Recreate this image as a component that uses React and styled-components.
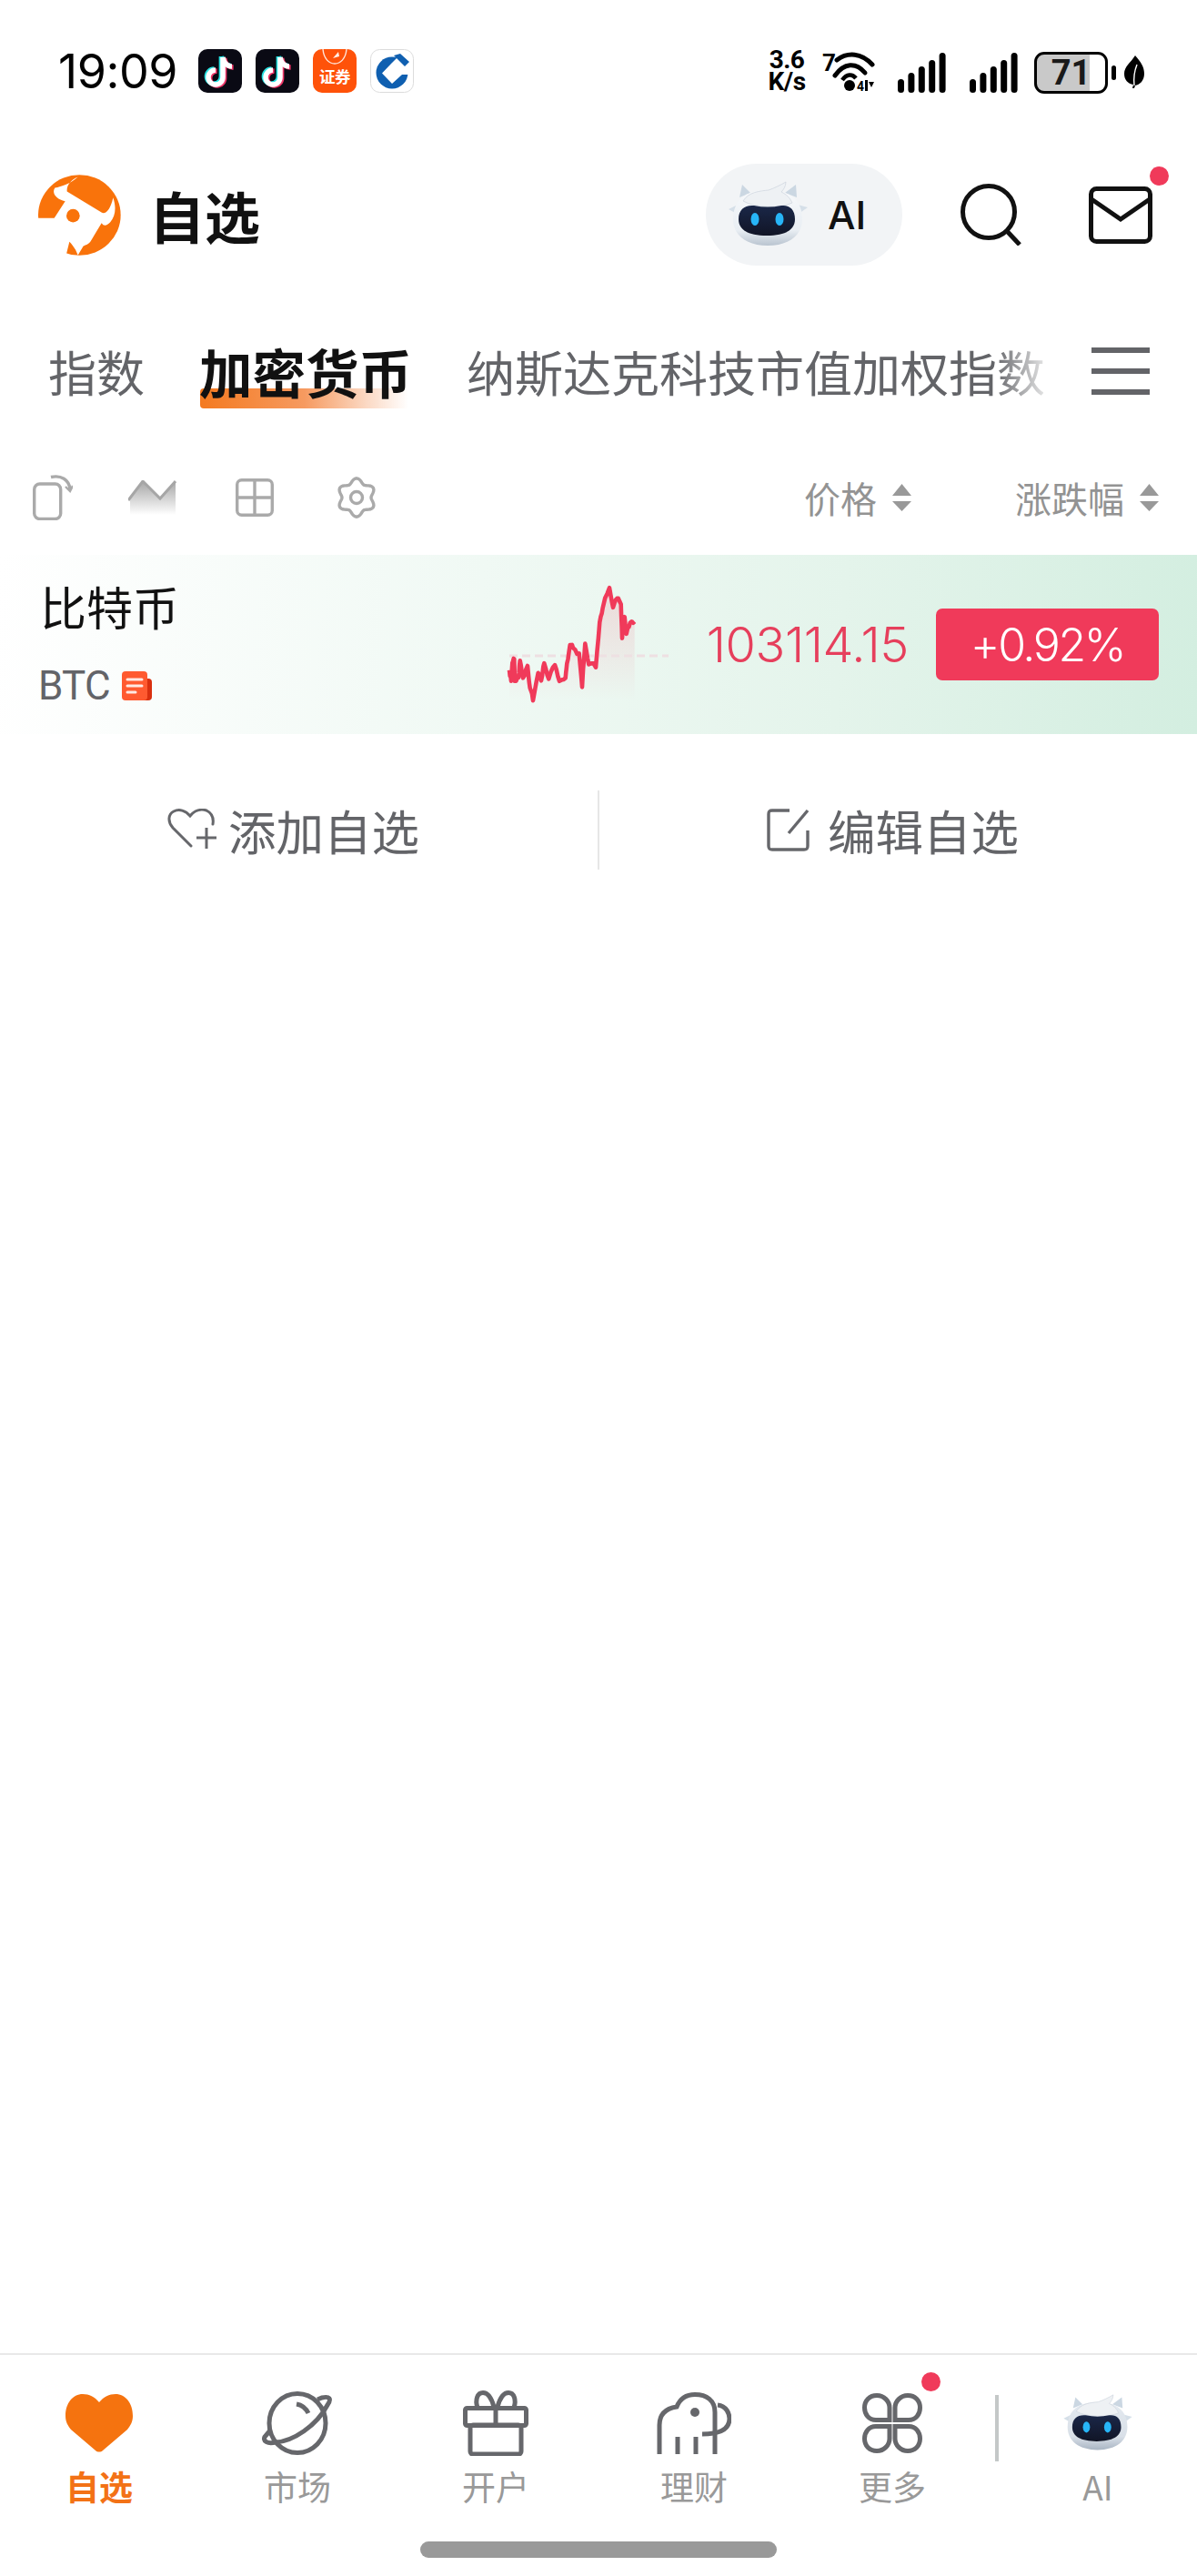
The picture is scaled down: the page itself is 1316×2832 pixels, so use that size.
import React from 'react';
import styled, { createGlobalStyle } from 'styled-components';

const FONT = `Roboto, "Noto Sans CJK SC", sans-serif`;

const GlobalStyle = createGlobalStyle`
  html, body { margin: 0; padding: 0; background: #fff; }
  body { font-family: ${FONT}; }
  * { box-sizing: border-box; }
`;

// chart data, key points of the curve (3x units) with a bit of seeded noise on top
const KEYS = [
  [90, 350], [96, 380], [100, 320], [106, 318], [108, 395], [120, 370], [125, 312], [135, 370], [150, 345], [158, 420],
  [168, 440], [185, 355], [195, 375], [205, 330], [220, 385], [240, 325], [255, 385], [275, 375], [280, 335], [290, 275],
  [300, 275], [320, 295], [330, 400], [340, 270], [352, 340], [375, 335], [388, 190], [398, 140], [420, 88], [432, 150],
  [445, 105], [458, 125], [462, 235], [470, 180], [476, 240], [488, 185], [503, 190],
];

const noise = (i) => (Math.sin(i * 12.9898) * 43758.5453) % 1;

const spark = [];
KEYS.forEach(([x, y], k) => {
  const next = KEYS[k + 1];
  if (!next) {
    spark.push([x / 3 - 18, y / 3 - 21]);
    return;
  }
  for (let t = 0; t < 1; t += 0.34) {
    const i = spark.length;
    spark.push([(x + (next[0] - x) * t) / 3 - 18, (y + (next[1] - y) * t) / 3 - 21 + noise(i) * 3.5]);
  }
});
const sparkLine = spark.map(([x, y]) => `${x.toFixed(1)},${y.toFixed(1)}`).join(' ');

// gear outline as a polar curve
const gearPath = (() => {
  let d = '';
  for (let a = 0; a <= 360; a += 5) {
    const t = (a * Math.PI) / 180;
    const r = 18.6 + 2.6 * Math.cos(6 * t);
    const x = 23 + r * Math.sin(t);
    const y = 23 - r * Math.cos(t);
    d += `${a === 0 ? 'M' : 'L'}${x.toFixed(2)} ${y.toFixed(2)} `;
  }
  return d + 'Z';
})();

const Page = styled.div`
  width: 1316px;
  height: 2832px;
  display: flex;
  flex-direction: column;
  overflow: hidden;
  background: #fff;
`;

const StatusBar = styled.div`
  height: 160px;
  padding: 54px 58px 0 64px;
  display: flex;
  align-items: flex-start;
`;

const Clock = styled.div`
  font-family: Inter, Roboto, sans-serif;
  font-size: 52px;
  line-height: 50px;
  color: #000;
  width: 154px;
  letter-spacing: -0.5px;
`;

const AppIcons = styled.div`
  display: flex;
  gap: 15px;
  svg { display: block; }
`;

const StatusRight = styled.div`
  margin-left: auto;
  display: flex;
  align-items: flex-start;
`;

const Speed = styled.div`
  width: 60px;
  font-family: Roboto, sans-serif;
  font-size: 28px;
  line-height: 24px;
  font-weight: 700;
  color: #000;
  text-align: center;
  letter-spacing: -0.5px;
`;

const Battery = styled.div`
  position: relative;
  width: 81px;
  height: 46px;
  margin: 3px 0 0 18px;
  border: 3.5px solid #000;
  border-radius: 11px;
  overflow: hidden;
  display: flex;
  align-items: center;
  justify-content: center;
  font-family: Roboto, sans-serif;
  font-size: 38px;
  font-weight: 700;
  color: #1a1a1a;
  background: linear-gradient(90deg, #c9c9c9 78%, #fff 78%);
`;

const BatteryNub = styled.span`
  display: block;
  width: 5px;
  height: 16px;
  margin: 18px 0 0 4px;
  border-radius: 3px;
  background: #000;
`;

const Header = styled.div`
  height: 152px;
  padding: 0 49px 0 42px;
  display: flex;
  align-items: center;
`;

const Title = styled.h1`
  margin: 0 0 0 31px;
  font-family: "Noto Sans CJK SC", sans-serif;
  font-size: 61px;
  line-height: 1;
  font-weight: 700;
  color: #111;
`;

const AiPill = styled.div`
  margin-left: auto;
  width: 216px;
  height: 112px;
  border-radius: 56px;
  background: #f2f4f6;
  display: flex;
  align-items: center;
  padding-left: 25px;
  gap: 22px;
  font-family: Inter, sans-serif;
  font-size: 43px;
  font-weight: 500;
  color: #111;
`;

const IconButton = styled.div`
  position: relative;
  margin-left: ${(p) => p.$gap}px;
  display: flex;
`;

const RedDot = styled.span`
  position: absolute;
  width: 21px;
  height: 21px;
  border-radius: 50%;
  background: #f03a5a;
  top: ${(p) => p.$top}px;
  right: ${(p) => p.$right}px;
`;

const TabBar = styled.div`
  height: 198px;
  padding: 0 52px 6px 53px;
  display: flex;
  align-items: center;
`;

const TabStrip = styled.div`
  width: 1094px;
  padding: 16px 0;
  display: flex;
  align-items: center;
  gap: 60px;
  white-space: nowrap;
  -webkit-mask-image: linear-gradient(90deg, #000 95%, rgba(0, 0, 0, 0.2) 100%);
  mask-image: linear-gradient(90deg, #000 95%, rgba(0, 0, 0, 0.2) 100%);
  isolation: isolate;
`;

const Tab = styled.div`
  position: relative;
  font-family: "Noto Sans CJK SC", sans-serif;
  line-height: 1;
  font-size: ${(p) => (p.$active ? 58.5 : 53)}px;
  font-weight: ${(p) => (p.$active ? 700 : 400)};
  color: ${(p) => (p.$active ? '#111' : '#636468')};
  ${(p) =>
    p.$active &&
    `&::after {
      content: '';
      position: absolute;
      z-index: -1;
      left: 1px;
      right: 4px;
      bottom: -12px;
      height: 22px;
      border-radius: 4px 0 0 4px;
      background: linear-gradient(90deg, #f47a20, #f69a60 50%, #fbd9c4 80%, rgba(255, 255, 255, 0));
    }`}
`;

const MenuButton = styled.div`
  margin-left: auto;
  width: 64px;
  height: 52px;
  display: flex;
  flex-direction: column;
  justify-content: space-between;
  span {
    display: block;
    height: 6px;
    background: #636468;
  }
`;

const ToolRow = styled.div`
  height: 100px;
  padding: 0 42px 26px 36px;
  display: flex;
  align-items: center;
`;

const ToolIcon = styled.svg`
  display: block;
  flex: none;
  margin-left: ${(p) => p.$gap || 0}px;
`;

const SortLabel = styled.div`
  display: flex;
  align-items: center;
  gap: 17px;
  margin-left: ${(p) => p.$gap};
  font-family: "Noto Sans CJK SC", sans-serif;
  font-size: 40px;
  line-height: 1;
  color: #939393;
`;

const QuoteRow = styled.div`
  height: 197px;
  padding: 0 42px 0 44px;
  display: flex;
  align-items: center;
  background: linear-gradient(95deg, #ffffff 0%, #f0f9f4 40%, #e4f4eb 70%, #d3eee0 100%);
`;

const NameCol = styled.div`
  width: 504px;
  flex: none;
  display: flex;
  flex-direction: column;
  gap: 45px;
  padding-bottom: 6px;
`;

const CoinName = styled.div`
  font-family: "Noto Sans CJK SC", sans-serif;
  font-size: 51px;
  line-height: 1;
  color: #111;
`;

const CoinCode = styled.div`
  display: flex;
  align-items: center;
  gap: 13px;
  margin-left: -2px;
  font-family: Roboto, sans-serif;
  font-size: 44px;
  line-height: 34px;
  color: #636468;
  letter-spacing: -0.8px;
`;

const Price = styled.div`
  flex: 1;
  text-align: right;
  font-family: Inter, sans-serif;
  font-size: 54px;
  font-weight: 300;
  line-height: 1;
  color: #e63f5c;
  letter-spacing: -0.4px;
`;

const ChangeBadge = styled.div`
  margin-left: 30px;
  width: 245px;
  height: 79px;
  border-radius: 7px;
  background: #f03a5a;
  color: #fff;
  display: flex;
  align-items: center;
  justify-content: center;
  font-family: Inter, sans-serif;
  font-size: 50px;
  font-weight: 300;
  letter-spacing: -2.4px;
`;

const Actions = styled.div`
  height: 210px;
  display: flex;
  align-items: center;
`;

const ActionButton = styled.div`
  flex: 1;
  display: flex;
  align-items: center;
  justify-content: center;
  gap: ${(p) => p.$gap}px;
  padding-right: 12px;
  font-family: "Noto Sans CJK SC", sans-serif;
  font-size: 52.5px;
  line-height: 1;
  color: #636468;
`;

const ActionDivider = styled.div`
  width: 2px;
  height: 87px;
  background: #e6e6e6;
  flex: none;
`;

const Spacer = styled.div`
  flex: 1;
`;

const BottomNav = styled.nav`
  height: 245px;
  border-top: 2px solid #e8e8e8;
  padding-top: 39px;
  display: flex;
  flex-direction: column;
  align-items: center;
`;

const NavGrid = styled.div`
  width: 100%;
  display: grid;
  grid-template-columns: repeat(5, 218px) 8px 1fr;
`;

const NavItem = styled.div`
  display: flex;
  flex-direction: column;
  align-items: center;
  font-family: "Noto Sans CJK SC", sans-serif;
  font-size: 37px;
  line-height: 36px;
  font-weight: ${(p) => (p.$active ? 700 : 400)};
  color: ${(p) => (p.$active ? '#f37216' : '#999')};
`;

const NavIconSlot = styled.div`
  position: relative;
  height: 72px;
  display: flex;
  align-items: center;
  justify-content: center;
  margin-bottom: 15px;
`;

const NavDivider = styled.div`
  width: 4px;
  height: 73px;
  margin: 5px 0 0 4px;
  background: #c4c8c8;
`;

const HomeBar = styled.div`
  width: 392px;
  height: 18px;
  margin-top: 43px;
  border-radius: 9px;
  background: #999;
`;

const TikTokIcon = () => {
  const note = 'M27 9 V31 A8 8 0 1 1 19 23 M27 9 C28 15 32 19 37 19';
  return (
    <svg width="48" height="48" viewBox="0 0 48 48">
      <rect width="48" height="48" rx="10" fill="#0a0a14" />
      <g fill="none" strokeWidth="5.5">
        <path d={note} stroke="#25e0e0" transform="translate(-1.6 -1)" />
        <path d={note} stroke="#f0386a" transform="translate(1.6 1)" />
        <path d={note} stroke="#fff" />
      </g>
    </svg>
  );
};

const SecuritiesIcon = () => (
  <svg width="48" height="48" viewBox="0 0 48 48">
    <rect width="48" height="48" rx="10" fill="#ff5209" />
    <path d="M11 0 C12 11 18 16 24 16 C30 16 36 11 37 0" fill="none" stroke="#fff" strokeWidth="1.4" opacity=".85" />
    <path d="M22 10 L28 3 L29 8 Z" fill="#fff" opacity=".9" />
    <text x="24" y="37" textAnchor="middle" fill="#fff" fontSize="17.5" fontWeight="700" fontFamily='"Noto Sans CJK SC", sans-serif' letterSpacing="-0.6">
      证券
    </text>
  </svg>
);

const BankIcon = () => (
  <svg width="48" height="48" viewBox="0 0 48 48">
    <rect x=".5" y=".5" width="47" height="47" rx="10" fill="#fff" stroke="#dcdcdc" />
    <circle cx="24" cy="26" r="17.5" fill="#0f5fb0" />
    <path d="M24 15 L30 9 L46 14 V28 H35 L24 38 L13 26.5 Z" fill="#fff" />
    <path d="M26 7 L33 5 L43 14 L38 19 Z" fill="#0f5fb0" />
  </svg>
);

const WifiIcon = () => (
  <svg width="58" height="48" viewBox="0 0 58 48" style={{ marginLeft: 9 }}>
    <text x="0" y="24" fontSize="26" fontWeight="700" fontFamily="Roboto, sans-serif" fill="#000">7</text>
    <g fill="none" stroke="#000" strokeWidth="5" strokeLinecap="round">
      <path d="M16 12 C28 3 43 4 55 17" />
      <path d="M14 29 C24 15 37 14 47 26" />
    </g>
    <path d="M22 34 C27 27 33 27 37 32" fill="none" stroke="#000" strokeWidth="4.5" />
    <circle cx="30" cy="40" r="6" fill="#000" />
    <text x="38" y="46" fontSize="14" fontWeight="700" fontFamily="Roboto, sans-serif" fill="#000">4</text>
    <path d="M47 34 h3 v12 h-3 Z M51 36 l6 0 l-3 6 Z" fill="#000" />
  </svg>
);

const SignalIcon = ({ gap }) => (
  <svg width="53" height="44" viewBox="0 0 53 44" style={{ marginLeft: gap, marginTop: 4 }}>
    {[0, 1, 2, 3, 4].map((i) => (
      <rect key={i} x={i * 11.4} y={[29, 22, 15, 8, 0][i]} width="7" height={[15, 22, 29, 36, 44][i]} rx="3.5" fill="#000" />
    ))}
  </svg>
);

const LeafIcon = () => (
  <svg width="22" height="36" viewBox="0 0 22 36" style={{ marginLeft: 9, marginTop: 7 }}>
    <path d="M12 0 C18 7 22 12 22 20 C22 28 17 32 12 33 L11 36 L9 36 L10 32 C4 31 0 27 0 20 C0 12 7 8 12 0 Z" fill="#000" />
    <path d="M11 33 C10 24 12 15 14 10" stroke="#fff" strokeWidth="1.4" fill="none" />
  </svg>
);

const LogoIcon = () => (
  <svg width="91" height="91" viewBox="35 36 273 268">
    <ellipse cx="171" cy="170" rx="136" ry="133" fill="#f9730b" />
    <path
      d="M20 180 L88 180 L124 124 C96 118 78 98 90 80 C112 76 142 66 166 44 C142 54 128 72 130 92 L245 162 C258 168 274 150 282 112 C292 140 292 172 272 194 C262 204 252 208 244 196 L208 256 C200 268 190 268 184 272 L166 302 L158 284 C152 276 146 266 138 258 L120 330 L20 330 Z"
      fill="#fff"
    />
    <circle cx="150" cy="172" r="22" fill="#f9730b" />
  </svg>
);

const RobotIcon = ({ id, width, height, dim }) => (
  <svg width={width} height={height} viewBox="0 0 87 74">
    <defs>
      <linearGradient id={`${id}-head`} x1="0" y1="0" x2="0" y2="1">
        <stop offset="0" stopColor={dim ? '#e4eaf0' : '#f7f9fb'} />
        <stop offset=".72" stopColor={dim ? '#d9e0e8' : '#e9eef3'} />
        <stop offset="1" stopColor={dim ? '#a9b5c3' : '#b9c4d0'} />
      </linearGradient>
      <linearGradient id={`${id}-visor`} x1="0" y1="0" x2="0" y2="1">
        <stop offset="0" stopColor="#1a2748" />
        <stop offset="1" stopColor="#111526" />
      </linearGradient>
    </defs>
    <path d="M12 18 L15 4 L24 13 Z M62 13 L74 4 L75 18 Z" fill="#cbd7e2" />
    <path d="M10 26 L0 31 L9 36 Z M76 26 L87 29 L77 36 Z" fill="#d5dfe8" />
    <path d="M5 42 C5 20 20 10 43 10 C66 10 81 20 81 42 C81 60 66 71 43 71 C20 71 5 60 5 42 Z" fill={`url(#${id}-head)`} />
    <path d="M16 22 C22 12 34 11 44 10 C50 8 58 4 63 1 C63 6 60 10 58 12 C64 15 67 18 70 24 C56 30 30 30 16 22 Z" fill="#eef1f4" stroke="#d0d7df" strokeWidth="0.8" />
    <path d="M11 42 C11 31 18 26 28 27 C38 29 48 29 58 27 C67 26 73 31 73 42 C73 54 62 60 42 60 C22 60 11 54 11 42 Z" fill={`url(#${id}-visor)`} />
    <ellipse cx="29" cy="42" rx="4.5" ry="7" fill="#27b5f7" />
    <ellipse cx="56" cy="42" rx="4.5" ry="7" fill="#27b5f7" />
  </svg>
);

const Sparkline = () => (
  <svg width="190" height="135" viewBox="0 0 190 135" style={{ flex: 'none', display: 'block' }}>
    <defs>
      <linearGradient id="spark-fill" x1="0" y1="0" x2="0" y2="1">
        <stop offset="0" stopColor="#f03a5a" stopOpacity=".16" />
        <stop offset="1" stopColor="#f03a5a" stopOpacity="0" />
      </linearGradient>
    </defs>
    <polygon points={`${sparkLine} 149.7,129 12,129`} fill="url(#spark-fill)" />
    <line x1="12" y1="80" x2="187" y2="80" stroke="#eee0e2" strokeWidth="3" strokeDasharray="9 5" />
    <polyline points={sparkLine} fill="none" stroke="#f03a5a" strokeWidth="4.6" strokeLinejoin="round" />
  </svg>
);

const SortArrows = () => (
  <svg width="21" height="30" viewBox="0 0 21 30">
    <path d="M10.5 0 L21 13 H0 Z M0 19 H21 L10.5 30 Z" fill="#999" />
  </svg>
);

const stroke = { fill: 'none', stroke: '#66676b', strokeWidth: 5 };

const App = () => (
  <Page>
    <GlobalStyle />

    <StatusBar>
      <Clock>19:09</Clock>
      <AppIcons>
        <TikTokIcon />
        <TikTokIcon />
        <SecuritiesIcon />
        <BankIcon />
      </AppIcons>
      <StatusRight>
        <Speed>3.6<br />K/s</Speed>
        <WifiIcon />
        <SignalIcon gap={25} />
        <SignalIcon gap={26} />
        <Battery>71</Battery>
        <BatteryNub />
        <LeafIcon />
      </StatusRight>
    </StatusBar>

    <Header>
      <LogoIcon />
      <Title>自选</Title>
      <AiPill>
        <RobotIcon id="pill-robot" width={87} height={74} />
        AI
      </AiPill>
      <IconButton $gap={64}>
        <svg width="68" height="68" viewBox="0 0 68 68">
          <circle cx="31" cy="31" r="28.5" fill="none" stroke="#111" strokeWidth="5" />
          <path d="M51 52 L65 67" stroke="#111" strokeWidth="5" />
        </svg>
      </IconButton>
      <IconButton $gap={73}>
        <svg width="70" height="63" viewBox="0 0 70 63">
          <rect x="2.5" y="2.5" width="65" height="58" rx="6" fill="none" stroke="#111" strokeWidth="5" />
          <path d="M3 14 L35 36 L67 14" fill="none" stroke="#111" strokeWidth="5" />
        </svg>
        <RedDot $top={-22} $right={-18} />
      </IconButton>
    </Header>

    <TabBar>
      <TabStrip>
        <Tab>指数</Tab>
        <Tab $active>加密货币</Tab>
        <Tab>纳斯达克科技市值加权指数</Tab>
      </TabStrip>
      <MenuButton>
        <span />
        <span />
        <span />
      </MenuButton>
    </TabBar>

    <ToolRow>
      <ToolIcon width="44" height="50" viewBox="0 0 44 50" fill="none" stroke="#aaa" strokeWidth="3.4">
        <rect x="1.7" y="10" width="29" height="38.5" rx="6" />
        <path d="M20 2.5 C31 0 40 5 41 16" />
        <path d="M36 13 L41 18 L44 12" strokeWidth="2.4" />
      </ToolIcon>
      <ToolIcon $gap={61} width="53" height="38" viewBox="0 0 53 38">
        <defs>
          <linearGradient id="area-fade" x1="0" y1="0" x2="0" y2="1">
            <stop offset="0" stopColor="#a6a6a6" />
            <stop offset="1" stopColor="#a6a6a6" stopOpacity="0" />
          </linearGradient>
        </defs>
        <path d="M2 20 L16 1 L35 20 L52 1 V38 H2 Z" fill="url(#area-fade)" />
        <path d="M0 22 L16 1 L35 20 L52 1" fill="none" stroke="#a6a6a6" strokeWidth="3" />
      </ToolIcon>
      <ToolIcon $gap={65} width="42" height="42" viewBox="0 0 42 42" fill="none" stroke="#aaa" strokeWidth="3.4">
        <rect x="1.7" y="1.7" width="38.6" height="38.6" rx="5" />
        <path d="M21 2 V40 M2 21 H40" />
      </ToolIcon>
      <ToolIcon $gap={68} width="46" height="46" viewBox="0 0 46 46" fill="none" stroke="#aaa" strokeWidth="3.4">
        <path d={gearPath} />
        <circle cx="23" cy="23" r="6.5" />
      </ToolIcon>
      <SortLabel $gap="auto">价格<SortArrows /></SortLabel>
      <SortLabel $gap="114px">涨跌幅<SortArrows /></SortLabel>
    </ToolRow>

    <QuoteRow>
      <NameCol>
        <CoinName>比特币</CoinName>
        <CoinCode>
          BTC
          <svg width="33" height="32" viewBox="0 0 33 32">
            <rect x="14" y="8" width="19" height="24" rx="4" fill="#d9300f" />
            <rect width="28" height="32" rx="4" fill="#ff5a30" />
            <path d="M6 9 H22 M6 16 H22 M6 23 H15" stroke="#ffe9e2" strokeWidth="3" strokeLinecap="round" />
          </svg>
        </CoinCode>
      </NameCol>
      <Sparkline />
      <Price>103114.15</Price>
      <ChangeBadge>+0.92%</ChangeBadge>
    </QuoteRow>

    <Actions>
      <ActionButton $gap={13}>
        <svg width="54" height="46" viewBox="0 0 54 46" fill="none" stroke="#66676b" strokeWidth="3">
          <path d="M26 41 L6 21 C0 14 1 6 7 3 C13 0 20 2 25 8 C30 2 37 0 43 2 C49 5 51 11 50 17" strokeLinecap="round" />
          <path d="M32 32 H54 M43 21 V44" />
        </svg>
        添加自选
      </ActionButton>
      <ActionDivider />
      <ActionButton $gap={20}>
        <svg width="47" height="47" viewBox="0 0 47 47" fill="none" stroke="#66676b" strokeWidth="3.4">
          <path d="M25 2 H6 C3 2 2 3 2 6 V41 C2 44 3 45 6 45 H41 C44 45 45 44 45 41 V24" />
          <path d="M24 27 L45 2" />
        </svg>
        编辑自选
      </ActionButton>
    </Actions>

    <Spacer />

    <BottomNav>
      <NavGrid>
        <NavItem $active>
          <NavIconSlot>
            <svg width="74" height="64" viewBox="0 0 74 64">
              <path
                d="M37 9 C32 3 26 0 19 0 C8 0 0 10 0 24 C0 31 3 35 6 39 L33 62 C35 64 39 64 41 62 L68 39 C71 35 74 31 74 24 C74 10 66 0 55 0 C48 0 42 3 37 9 Z"
                fill="#f5730f"
              />
            </svg>
          </NavIconSlot>
          自选
        </NavItem>
        <NavItem>
          <NavIconSlot>
            <svg width="78" height="70" viewBox="0 0 78 70" {...stroke}>
              <ellipse cx="39" cy="35" rx="31" ry="32.5" />
              <path d="M15 56 C34 55 60 38 72 15 C77 8 74 5 66 7 L61 9" />
              <path d="M15 56 C6 58 1 55 3 50 L9 43" />
              <path d="M38 14 C44 15 48 18 51 24" />
            </svg>
          </NavIconSlot>
          市场
        </NavItem>
        <NavItem>
          <NavIconSlot>
            <svg width="72" height="72" viewBox="0 0 72 72" {...stroke}>
              <rect x="2.5" y="19.5" width="67" height="19" rx="2" />
              <rect x="8" y="38" width="56" height="32" rx="3" />
              <path d="M36 20 V38" />
              <path d="M34 18 C31 7 27 2.5 22 2.5 C16 2.5 13 10 16 19" />
              <path d="M38 18 C41 7 45 2.5 50 2.5 C56 2.5 59 10 56 19" />
            </svg>
          </NavIconSlot>
          开户
        </NavItem>
        <NavItem>
          <NavIconSlot>
            <svg width="82" height="68" viewBox="0 0 82 68" {...stroke}>
              <path d="M3 68 V36 C3 25 9 18 22 16 C26 6 33 2.5 42 2.5 C55 2.5 64 9 64 22 V68" />
              <path d="M67 14 C77 15 80 24 80 29 C80 40 71 46 50 46" />
              <path d="M23 49 V68 M43 49 V68" />
              <circle cx="42" cy="22" r="5" fill="#66676b" stroke="none" />
            </svg>
          </NavIconSlot>
          理财
        </NavItem>
        <NavItem>
          <NavIconSlot>
            <svg width="66" height="66" viewBox="0 0 66 66" {...stroke}>
              {['', 'translate(66 0) scale(-1 1)', 'translate(0 66) scale(1 -1)', 'translate(66 66) scale(-1 -1)'].map((t) => (
                <path key={t} transform={t} d="M30 29.5 H15 C7 29.5 2.5 23 2.5 16 C2.5 8 8 2.5 16 2.5 C24 2.5 30 9 30 16 Z" />
              ))}
            </svg>
            <RedDot $top={-20} $right={-20} />
          </NavIconSlot>
          更多
        </NavItem>
        <NavDivider />
        <NavItem>
          <NavIconSlot>
            <RobotIcon id="nav-robot" width={76} height={64} dim />
          </NavIconSlot>
          AI
        </NavItem>
      </NavGrid>
      <HomeBar />
    </BottomNav>
  </Page>
);

export default App;
